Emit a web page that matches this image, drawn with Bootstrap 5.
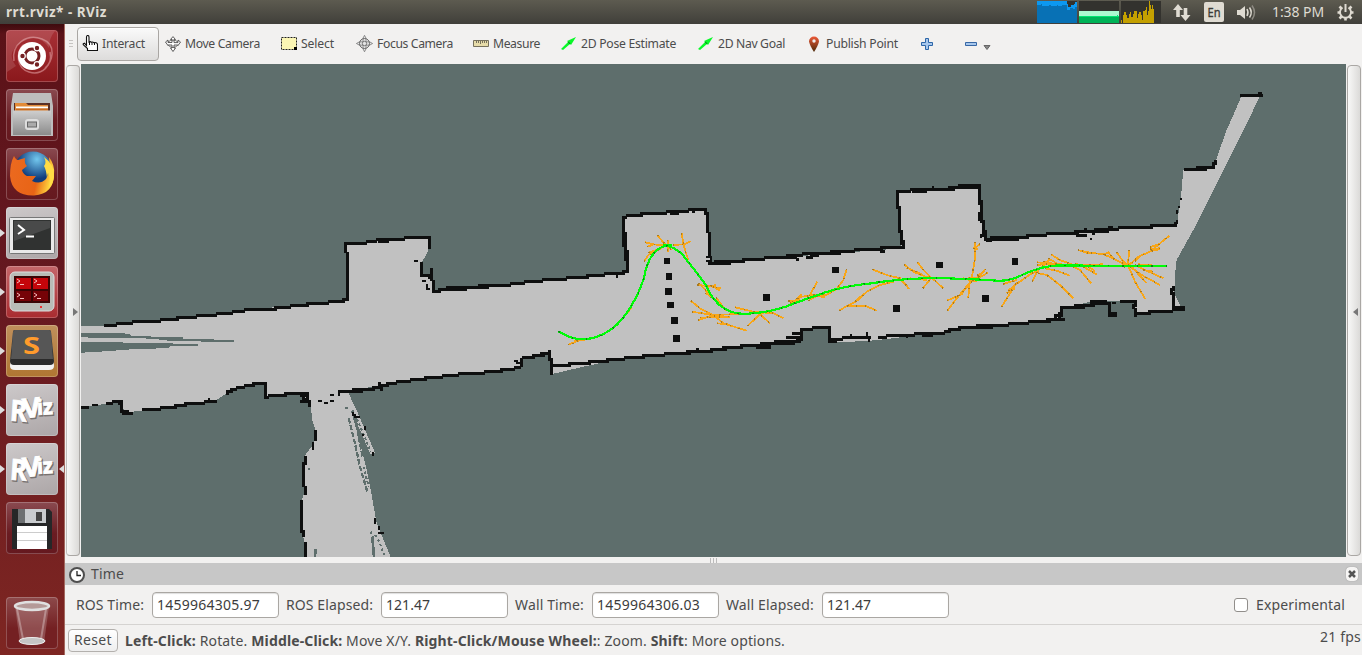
<!DOCTYPE html>
<html lang="en">
<head>
<meta charset="utf-8">
<title>rrt.rviz* - RViz</title>
<link href="https://cdn.jsdelivr.net/npm/bootstrap@5.3.0/dist/css/bootstrap.min.css" rel="stylesheet">
<style>
body{font-family:"Noto Sans","Open Sans",sans-serif;font-size:14px;line-height:20px;color:#4c4c4c;background:#f2f1f0;height:655px;overflow:hidden}
svg{display:block;flex:none}
.fit{white-space:nowrap;display:inline-block;flex:none}
.topbar{height:24px;background:linear-gradient(#5d5b50,#403f3a);color:#dfdbd2;padding-left:6px}
.graphs{margin-right:12px}
.dock{width:65px;background:linear-gradient(#3e0b0e 0,#5b1218 10px,#651820 40%,#7e2622);border-right:1px solid #a3685f;padding:6px 0 6px 0;flex:none}
.tile{width:52px;height:52px;border-radius:4px;margin-left:6px;position:relative;margin-bottom:7px;box-shadow:inset 0 0 0 1px #ffffff38;background:linear-gradient(#8a4a50,#6a1c22 60%,#65191f)}
.tile.gray{background:linear-gradient(165deg,#cdc9ca,#aca6a7)}
.tile.last{margin:auto 0 0 6px;background:linear-gradient(#8d4a4b,#742022 60%)}
.tile.red{background:linear-gradient(#a83036,#8a181c)}
.tile.term{background:linear-gradient(#c4666a,#a92c30)}
.tile.sub{background:linear-gradient(#c0905c,#b07632)}
.run::before,.act::after{content:"";position:absolute;top:22px;border:4px solid transparent}
.run::before{left:-6px;border-left:5px solid #ddd;border-right:0}
.act::after{right:-6px;border-right:5px solid #ddd;border-left:0}
.tools{height:40px;font-size:12.2px;padding-left:4px}
.tool{height:34px;margin-top:-1px}
.tool svg{margin-right:4px}
.tool.on{width:82px;border:1px solid #a9a6a3;border-radius:4px;background:linear-gradient(#fafafa,#dddcdb);padding-left:4px;margin-right:6px;box-shadow:inset 0 1px #fff}
.view{height:493px}
.side{width:14px;height:491px;margin:1px 1px 0;border:1px solid #aaa7a4;border-radius:4px;background:linear-gradient(90deg,#f8f8f7,#dbdad8)}
.side.l{border-left-color:#c2c0be}
.splitter{height:6px}
.dockhead{height:22px;background:#c7c7c7;padding:0 4px}
.fields{height:40px;padding-left:11px;border-bottom:1px solid #d5d3d1}
.field{width:127px;height:26px;margin:0 7px 0 8px;border:1px solid #aaa7a3;border-radius:4px;background:#fff;color:#3c3c3c;padding:2px 4px;box-shadow:inset 0 1px 1px #0002}
.check{width:14px;height:14px;border:1px solid #918e8b;border-radius:3px;background:#fff}
.status{height:30px;padding-left:3px}
.reset{width:50px;height:23px;border:1px solid #b3b0ad;border-radius:4px;background:linear-gradient(#fff,#eee);text-align:center;line-height:20px}
.x{width:12px;height:14px;border-radius:4px;background:#f6f5f4;box-shadow:0 0 1px #777}
</style>
<script src="https://cdn.jsdelivr.net/npm/bootstrap@5.3.0/dist/js/bootstrap.bundle.min.js"></script>
</head>
<body class="d-flex flex-column">
<header class="topbar d-flex align-items-center justify-content-between">
  <b class="fit" data-w="101" style="font-size:13.5px">rrt.rviz* - RViz</b>
  <div class="d-flex align-items-center">
    <svg class="graphs" width="124" height="24" shape-rendering="crispEdges">
      <path fill="#33322e" d="M0 1h40v22H0zM42 1h40v22H42zM84 1h40v22H84z"/>
      <path fill="#0c98f0" d="M0 1h30v3h1v3h3V5h3V4h1V2h2v21H0z"/><path fill="#0871b5" d="M0 5h4V4h1v2h7V5h2v1h6V5h1v1h4V5h5v5h3V8h3v1h2V7h2v16H0z"/>
      <path fill="#acf9cf" d="M42 11h40v5H42z"/><path fill="#00e770" d="M42 16h38v-1h1v1h1v1H42z"/><path fill="#00b357" d="M42 17h40v6H42z"/>
      <path fill="#c4a000" d="M84 23v-3h1v3h1v-8h1v-3h2v3h1v3h2v-4h1v-2h1v5h2v-3h1v-3h3v7h1v-4h1v-2h2v3h1v5h1v-9h2v-1h1v-3h1v8h1v-4h1V1h1v4h1v4h1V5h1v4h1v14z"/>
    </svg>
    <svg width="18" height="24" style="margin-right:13px" fill="#dfdbd2"><path d="M5 4 0 10h3.200v7h3.600v-7H10zM12.500 21 7.500 15h3.200V8h3.600v7h3.200z"/></svg>
    <svg width="20" height="24" style="margin-right:12px"><rect y="2" width="20" height="20" rx="2" fill="#dfdbd2"/><text x="3.500" y="17" font-size="12" textLength="13" lengthAdjust="spacingAndGlyphs" fill="#3c3b37" stroke="#3c3b37" stroke-width=".3">En</text></svg>
    <svg width="20" height="24" style="margin-right:16px"><path fill="#dfdbd2" d="M1 10h3l5-4v13l-5-4H1z"/><path fill="none" stroke="#dfdbd2" stroke-width="1.500" d="M11 9q2 3.500 0 7M13.500 7.500q3.500 5 0 10"/><path fill="none" stroke="#8d8a82" stroke-width="1.500" d="M16 5.500q5 7 0 14"/></svg>
    <span class="fit" data-w="52" style="margin-right:13px">1:38 PM</span>
    <svg width="17" height="24" style="margin-right:8px" fill="none" stroke="#dfdbd2"><path stroke-width="1.900" d="M5.500 7.600a5.500 5.500 0 1 0 6 0"/><path stroke-width="2" d="M8.500 4v8"/><path stroke-width="2.600" d="M.500 12.500h3M13.500 12.500h3M2.500 6.500l2 2M14.500 6.500l-2 2M2.500 18.500l2-2M14.500 18.500l-2-2M8.500 17.500v3"/></svg>
  </div>
</header>
<div class="d-flex flex-grow-1">
<aside class="dock d-flex flex-column">
  <div class="tile red"><svg width="52" height="52" fill="none"><path stroke="#d58c8e" stroke-opacity=".7" stroke-width="1.500" d="M8 31C5 15 20 3 36 9s10 23 3 29M44 22c3 13-8 24-21 20S10 23 17 15"/><path fill="#fff" fill-opacity=".13" d="M1 1h48Q43 8 43 18 33 2 16 12T10 36L1 42z"/><circle cx="26" cy="26" r="14" fill="#fff"/><circle cx="26" cy="26" r="7" stroke="#742022" stroke-width="3"/><g stroke="#fff" stroke-width="1.200" fill="#742022"><circle cx="16.500" cy="26" r="2.800"/><circle cx="31" cy="18" r="2.800"/><circle cx="31" cy="34.500" r="2.800"/></g></svg></div>
  <div class="tile"><svg width="52" height="52"><defs><linearGradient id="cab" x2="0" y2="1"><stop stop-color="#cfcfcf"/><stop offset="1" stop-color="#8b8b8b"/></linearGradient></defs><path fill="#bdbdbd" d="M7 4h38l2 13v30H5V17z"/><path fill="#5a3026" d="M8 14h36v9H8z"/><path fill="#e28b38" d="M9 14h11l2 2h20v7H9z"/><path fill="#fff" d="M10 17.500h32v2H10z"/><path fill="#c86a20" d="M10 19.500h32v2H10z"/><path fill="url(#cab)" d="M7 21.500h38V46H7z"/><rect x="19" y="30" width="14" height="11" rx="3" fill="#ddd"/><rect x="21.500" y="33" width="9" height="5" fill="#aaa" stroke="#666"/></svg></div>
  <div class="tile"><svg width="52" height="52"><defs><radialGradient id="sky" cx=".6" cy=".2"><stop stop-color="#72c7ee"/><stop offset="1" stop-color="#103c7c"/></radialGradient><linearGradient id="fox" x2="1" y2=".2"><stop stop-color="#ec6a20"/><stop offset=".7" stop-color="#e86416"/><stop offset="1" stop-color="#ffd33d"/></linearGradient></defs><circle cx="27" cy="23" r="19.500" fill="url(#sky)"/><path fill="url(#fox)" d="M8 8q2 4 4 4l7-2q-1 5 2 8l-5 4q1 4 5 6l9 0-4 5q8 4 14-2 5-8 3-22 6 8 5 17 0 20-20 21.500Q6 48 4 28q0-13 4-20z"/><path fill="#ffdc45" d="M38 9q11 8 10 20-1 7-5 11 2-10-1-15l-1 5q-1-9-3-12 3-3 0-9z"/></svg></div>
  <div class="tile gray run"><svg width="52" height="52"><rect x="3.500" y="10.500" width="45" height="36" rx="1" fill="#e9e9e9" stroke="#777"/><rect x="7" y="13" width="38" height="30" fill="#303231"/><path fill="#fff" opacity=".12" d="M8 14h36v7L8 34z"/><path fill="none" stroke="#fff" stroke-width="2" d="M12 18l6 5-6 4M20 29.500h8"/></svg></div>
  <div class="tile term run"><svg width="52" height="52"><rect x="4" y="6" width="44" height="39" rx="5" fill="#b9bcb7" stroke="#ddd"/><path fill="#3a0505" d="M8 10h36v27H8z"/><path fill="#c5050a" d="M10 12h15v11H10zM27 12h15v11H27z"/><path fill="#760307" d="M10 25h15v10H10zM27 25h15v10H27z"/><path stroke="#f5bcbc" fill="none" d="M11 13l3 2-3 2M14 18.500h4M28 13l3 2-3 2M31 18.500h4M11 27l3 2-3 2M14 32.500h4M28 27l3 2-3 2M31 32.500h4"/><circle cx="35" cy="41" r="1" fill="red"/></svg></div>
  <div class="tile sub run"><svg width="52" height="52"><path fill="#f2f2f2" d="M7 8L4 41q0 4 5 4h34q5 0 5-4L45 8z"/><path fill="#2b2b2b" d="M9 5h34q2 0 2 2l3 29q0 4-4 4H8q-4 0-4-4L7 7q0-2 2-2z"/><path fill="#565656" d="M9 5h34q2 0 2 2l2 27H5L7 7q0-2 2-2z"/><text x="17" y="28.500" font-size="23" font-weight="bold" textLength="17" lengthAdjust="spacingAndGlyphs" fill="#ff9b2c">S</text></svg></div>
  <div class="tile gray run"><svg width="52" height="52" font-family="Open Sans" font-weight="bold"><g fill="#77716f" stroke="#77716f" stroke-width="1.500" transform="translate(1 1.200)"><text x="4" y="37" font-size="29" textLength="17" lengthAdjust="spacingAndGlyphs" transform="rotate(4 10 30)">R</text><text x="17" y="33.500" font-size="27" textLength="18" lengthAdjust="spacingAndGlyphs" transform="rotate(-6 24 28)">V</text><text x="31" y="30.500" font-size="21" textLength="16" lengthAdjust="spacingAndGlyphs" transform="rotate(-3 36 28)">iz</text></g><g fill="#fff" stroke="#fff" stroke-width=".9"><text x="4" y="37" font-size="29" textLength="17" lengthAdjust="spacingAndGlyphs" transform="rotate(4 10 30)">R</text><text x="17" y="33.500" font-size="27" textLength="18" lengthAdjust="spacingAndGlyphs" transform="rotate(-6 24 28)">V</text><text x="31" y="30.500" font-size="21" textLength="16" lengthAdjust="spacingAndGlyphs" transform="rotate(-3 36 28)">iz</text></g></svg></div>
  <div class="tile gray run act"><svg width="52" height="52" font-family="Open Sans" font-weight="bold"><g fill="#77716f" stroke="#77716f" stroke-width="1.500" transform="translate(1 1.200)"><text x="4" y="37" font-size="29" textLength="17" lengthAdjust="spacingAndGlyphs" transform="rotate(4 10 30)">R</text><text x="17" y="33.500" font-size="27" textLength="18" lengthAdjust="spacingAndGlyphs" transform="rotate(-6 24 28)">V</text><text x="31" y="30.500" font-size="21" textLength="16" lengthAdjust="spacingAndGlyphs" transform="rotate(-3 36 28)">iz</text></g><g fill="#fff" stroke="#fff" stroke-width=".9"><text x="4" y="37" font-size="29" textLength="17" lengthAdjust="spacingAndGlyphs" transform="rotate(4 10 30)">R</text><text x="17" y="33.500" font-size="27" textLength="18" lengthAdjust="spacingAndGlyphs" transform="rotate(-6 24 28)">V</text><text x="31" y="30.500" font-size="21" textLength="16" lengthAdjust="spacingAndGlyphs" transform="rotate(-3 36 28)">iz</text></g></svg></div>
  <div class="tile"><svg width="52" height="52"><path fill="#262728" d="M6 7h37l3 3v37H6z"/><path fill="#6d7072" d="M12 7h7v14h-7z"/><path fill="#c9cccf" d="M19 7h21v14H19z"/><path fill="#444" d="M30 10h6v9h-6z"/><path fill="#fff" d="M11 24h30v23H11z"/><path stroke="#ccc" d="M11 30.500h30M11 38.500h30"/></svg></div>
  <div class="tile last"><svg width="52" height="52"><path fill="#fff" fill-opacity=".2" d="M9 9h34l-5 37H14z"/><path stroke="#fff" stroke-opacity=".3" stroke-width="2" d="M11 12l6 30M40 12l-5 30"/><ellipse cx="26" cy="9" rx="17" ry="4" fill="#b59a98" stroke="#e0e0e0" stroke-width="2.500"/><ellipse cx="26" cy="44" rx="13" ry="3.500" fill="#c5c5c5" stroke="#eee"/></svg></div>
</aside>
<main class="flex-grow-1 d-flex flex-column">
  <nav class="tools d-flex align-items-center">
    <svg width="8" height="12"><path stroke="#c6c4c2" d="M0 2.500h4M0 5.500h4M0 8.500h4"/></svg>
    <div class="tool on d-flex align-items-center"><svg width="16" height="17"><path fill="#fff" stroke="#111" stroke-width="1.100" d="M4.500 10.500V2q0-1.500 1.200-1.500T7 2v5q1.300-1 2.400.3 1.300-.8 2.400.4Q15.500 7 15.500 10v5.500h-10v-2L1.500 10q-1-1.500 1-1.800z"/><path stroke="#111" d="M7.500 7v3M10 7.500V10M12.500 8v2"/></svg><span class="fit" data-w="43">Interact</span></div>
    <div class="tool d-flex align-items-center" style="width:116px"><svg width="16" height="16" fill="#fff" stroke="#4d4d4d" stroke-width=".9"><path d="M8 .6l2.500 3H9v3h4V4l2.500 2-2.500 3.500V9H9v3h1.500L8 15.500 5.500 12H7V9H3v.5L.5 6 3 4v2.500h4v-3H5.500z"/><path fill="none" d="M3 6q5-4 10 0M3.500 9.500q4.500 4 9 0" stroke-width=".8"/></svg><span class="fit" data-w="75">Move Camera</span></div>
    <div class="tool d-flex align-items-center" style="width:75px"><svg width="16" height="13"><path fill="#fbf6b4" stroke="#222" stroke-dasharray="2 1" d="M.5.500h15v12H.5z"/><path d="M13 10h3v3h-3z"/></svg><span class="fit" data-w="33">Select</span></div>
    <div class="tool d-flex align-items-center" style="width:117px"><svg width="17" height="17" fill="none" stroke="#777"><path fill="#e4e4e4" stroke-width=".8" d="M8.500.3L10 3.200v3.600h3.500L16.600 8.500 13.500 10.200H10v3.600l-1.500 3L7 13.800v-3.600H3.500L.4 8.500 3.500 6.800H7V3.200z"/><circle cx="8.500" cy="8.500" r="5" stroke="#666"/><circle cx="8.500" cy="8.500" r="2.200"/></svg><span class="fit" data-w="76">Focus Camera</span></div>
    <div class="tool d-flex align-items-center" style="width:88px"><svg width="16" height="8"><path fill="#e7dca9" stroke="#77715c" d="M.5.500h15v6H.5z"/><path stroke="#77715c" d="M3.500 1v2M5.500 1v2M7.500 1v3M9.500 1v2M11.500 1v2M13.500 1v2"/></svg><span class="fit" data-w="47">Measure</span></div>
    <div class="tool d-flex align-items-center" style="width:137px"><svg width="16" height="14"><path fill="#08f928" d="M0 12l7-7-1-1 9-4-5 8-1-1-7 6z"/><path fill="#098b1b" d="M7.500 4.500l2 2-.7.700-2-2z"/></svg><span class="fit" data-w="95">2D Pose Estimate</span></div>
    <div class="tool d-flex align-items-center" style="width:110px"><svg width="16" height="14"><path fill="#08f928" d="M0 12l7-7-1-1 9-4-5 8-1-1-7 6z"/><path fill="#098b1b" d="M7.500 4.500l2 2-.7.700-2-2z"/></svg><span class="fit" data-w="67">2D Nav Goal</span></div>
    <div class="tool d-flex align-items-center" style="width:113px"><svg width="14" height="16"><defs><linearGradient id="pin" x2="0" y2="1"><stop stop-color="#ed5937"/><stop offset="1" stop-color="#4c2a0a"/></linearGradient></defs><path fill="url(#pin)" d="M1 5.500a5 5 0 0 1 10 0Q10 10 6 16 2 10 1 5.500"/><circle cx="6" cy="5" r="1.700" fill="#eee"/></svg><span class="fit" data-w="72">Publish Point</span></div>
    <svg width="44" height="12"><path fill="#a7c7ec" stroke="#2d66a8" d="M4.500.5h3v4h4v3h-4v4h-3v-4h-4v-3h4z"/></svg>
    <svg width="28" height="14"><path fill="#a7c7ec" stroke="#3767a5" d="M.5 5.500h11v3H.5z"/><path fill="#888" stroke="#666" d="M19 8.500h6l-3 4z"/></svg>
  </nav>
  <section class="view d-flex">
    <div class="side l d-flex align-items-center"><svg width="12" height="8" style="margin-top:2px"><path fill="#777" d="M6 0l5 4-5 4z"/></svg></div>
    <svg id="map" width="1265" height="493" viewBox="81 64 1265 493" shape-rendering="crispEdges">
      <path fill="#5e6e6c" d="M81 64h1265v493H81z"/>
      <g fill="#c1c1c1">
        <path transform="translate(80 220) scale(.33333)" d="M3 318 75 318 120 308 225 303 340 290 500 270 660 254 800 241 800 72 900 62 1047 52 1047 85 1035 112 1022 130 1022 165 1053 170 1060 212 1205 203V460L1035 475 930 490 805 514 800 530 818 590 838 660 858 740 875 825 890 910 932 1011H680L675 970 662 925V850L672 820V710L695 680 706 660V630L697 600 692 555 665 520 560 528 555 492 480 498 440 520 405 543 250 563 135 578 122 545 3 562z"/>
        <path transform="translate(480 180) scale(.33333)" d="M-5 321 160 305 440 277 430 110 550 98 678 91 690 247 900 235V488L680 512 395 542 310 560 217 582 205 525 125 532 122 565-5 578z"/>
        <path transform="translate(680 170) scale(.33333)" d="M-5 125 75 122 90 280 300 263 665 235 650 65 760 58 897 48 917 210H975V465L870 475 730 493 630 506 570 512 500 516 450 515 445 475 365 480 360 517 170 532-5 548z"/>
        <path transform="translate(960 80) scale(.33333)" d="M-5 320H57L75 480 230 466 450 448 650 436 663 350 670 270 760 265 775 220 800 150 820 105 846 45H902L870 110 800 250 750 350 700 450 650 540 645 585 643 640 662 680 640 690 525 698V662L405 662 310 684 300 717 150 736-5 746z"/>
      </g>
      <path fill="#5e6e6c" transform="translate(80 220) scale(.33333)" d="M3 339 125 339 150 343 155 348 308 352 310 357 430 359 462 361V365H380L245 361 228 356 30 353 3 351zM3 366H130V369L325 371 354 373V377H270L268 383 190 388 108 389V393L26 396 3 399zM702 988h9v10l-5 13h-4zM684 743h6v6h-6zM795 560h8v8h-8z"/>
      <g fill="none" transform="translate(80 220) scale(.33333)"><path stroke="#c1c1c1" stroke-width="14" d="M798 520 826 580 852 640 878 700"/><path stroke="#5e6e6c" stroke-width="7" stroke-dasharray="16 5" d="M806 595 825 670 840 740 862 815M826 590 836 650 848 710"/><path stroke="#5e6e6c" stroke-width="6" stroke-dasharray="8 7" d="M818 570 850 640 872 695M850 740 866 800M872 935 880 955M886 945 900 970 912 1005"/><path stroke="#5e6e6c" stroke-width="8" d="M877 950 882 1011"/></g>
      <path id="walls" fill="#0e0f0f"/>
      <path id="tree" fill="none" stroke="#f8a618" stroke-width="1.800"/>
      <path id="nodes" fill="none" stroke="#a87a20" stroke-width="1.500" stroke-dasharray="1.300 8"/>
      <path id="route" fill="none" stroke="#00fb08" stroke-width="2.200"/>
      <path id="routeDots" fill="none" stroke="#078b10" stroke-width="1.500" stroke-dasharray="1.500 13"/>
      <path fill="#0e0f0f" d="M664 258h6v6h-6zM666 273h6v7h-6zM665 288h7v7h-7zM667 302h7v6h-7zM671 317h7v7h-7zM673 335h7v7h-7zM763 294h7v7h-7zM832 267h7v6h-7zM893 305h7v7h-7zM936 262h7v6h-7zM1012 258h6v7h-6zM982 295h7v7h-7z"/>
    </svg>
    <div class="side d-flex align-items-center"><svg width="12" height="8" style="margin-top:2px"><path fill="#777" d="M10 0L5 4l5 4z"/></svg></div>
  </section>
  <div class="splitter d-flex justify-content-center align-items-center"><svg width="8" height="5"><path stroke="#bbb" d="M.5 0v5M3.500 0v5M6.500 0v5"/></svg></div>
  <div class="dockhead d-flex align-items-center"><svg width="16" height="16" style="margin:2px 6px 0 0"><circle cx="8" cy="8" r="7" fill="#fff" stroke="#4e4e4e" stroke-width="2"/><path fill="none" stroke="#222" stroke-width="1.300" d="M8 4v4.500h4"/></svg><span class="fit" data-w="33">Time</span><div class="x ms-auto"><svg width="12" height="14"><path stroke="#555" stroke-width="2.500" d="M3 4l6 6M9 4l-6 6"/></svg></div></div>
  <div class="fields d-flex align-items-center">
    <span class="fit" data-w="68">ROS Time:</span><div class="field"><span class="fit" data-w="103">1459964305.97</span></div>
    <span class="fit" data-w="87">ROS Elapsed:</span><div class="field"><span class="fit" data-w="44">121.47</span></div>
    <span class="fit" data-w="69">Wall Time:</span><div class="field"><span class="fit" data-w="103">1459964306.03</span></div>
    <span class="fit" data-w="88">Wall Elapsed:</span><div class="field"><span class="fit" data-w="44">121.47</span></div>
    <div class="check ms-auto" style="margin-right:8px"></div><span class="fit" data-w="89" style="margin-right:17px">Experimental</span>
  </div>
  <div class="status d-flex align-items-center">
    <div class="reset"><span class="fit" data-w="38">Reset</span></div>
    <span class="fit" data-w="660" style="margin:2px 0 0 7px"><b>Left-Click:</b> Rotate. <b>Middle-Click:</b> Move X/Y. <b>Right-Click/Mouse Wheel:</b>: Zoom. <b>Shift</b>: More options.</span>
    <span class="fit ms-auto" data-w="41" style="margin:-7px 1px 0 0">21 fps</span>
  </div>
</main>
</div>
<script>
// Each group: origin x, origin y, then polylines in thirds of a pixel.
const walls = [
 [80,220,"75,316 100,316 120,308 150,310 170,303 225,303 260,298 340,290 445,279 500,270 560,268 660,255 775,244 804,238 800,185 802,130 797,72","797,70 855,68 895,60 970,55 1050,52 1047,80","895,63 920,63","1022,128 1022,165 1053,170 1053,150","1055,170 1061,212 1105,209 1200,202","1100,205 1200,199","3,560 20,562","40,554 50,554","80,550 120,543 124,575 140,580","125,543 127,575 155,578","190,570 270,562 315,553 370,547 405,543","385,537 387,543","440,518 470,504 525,492 555,492 557,530","555,530 610,524 640,518 680,520 688,555","665,525 680,545 665,545","675,520 670,540","720,543 725,543","737,552 740,552","755,546 760,546","755,523 757,525","775,525 775,515 830,510 895,503 930,490 980,482 1035,475 1140,462 1200,458","815,512 845,512","900,490 904,505","704,635 708,660","706,640 704,655","698,672 698,685","676,710 672,735 671,780 675,820","662,845 662,865 666,910 662,925 672,945","674,968 678,985 678,1005","820,578 825,590 836,594","855,622 855,625","847,643 849,645","877,698 877,708","888,898 888,908","895,922 895,925","900,942 908,942","1008,125 1010,125","1032,182 1034,182","1040,197 1046,210"],
 [480,180,"0,321 80,314 160,303 250,296 320,289 390,281 440,276 440,220 434,180 430,110 470,104 550,98 620,91 678,90 682,120 686,170 688,225","0,318 50,318","430,112 432,190 440,250","560,95 590,100","625,88 640,91","674,95 684,110","690,165 690,190","414,280 414,290","680,245 692,245 694,235 680,232","690,249 770,243 830,237 900,231","690,252 745,250","0,578 50,574 80,568 120,563 125,535 200,522 205,515 207,535","105,545 115,548","185,522 205,522 210,530 213,560 213,580","215,557 280,552 380,541 450,533 540,524 620,517 700,510 770,500 840,493 900,487","650,510 678,515","820,497 870,497"],
 [680,170,"90,278 165,273 240,266 320,259 365,253 440,248 520,241 570,237 630,233 670,232 668,215 662,200 658,120 650,100 650,65 700,60 760,58 835,53 897,47 900,90","90,282 150,280","330,262 350,265","380,260 410,258","435,252 480,252","595,240 610,242","652,70 655,110 664,220","697,65 735,65","765,57 820,57","758,50 758,56","835,50 895,50","902,95 904,135 908,160 914,185 918,210 960,207","895,128 895,145","902,195 902,200","920,213 932,213","0,548 75,545 110,537 170,531 230,524 285,517 350,511 364,505 366,478 425,472 445,472 448,510 510,502 565,499 570,512","230,530 265,530","285,520 360,516","340,490 362,490","320,504 360,502","448,512 465,512","515,498 520,502","560,492 566,500","600,501 650,496 730,491 790,488 815,477 870,472 910,466 960,463","680,498 680,502","730,495 755,495"],
 [960,80,"0,318 57,318 57,360 62,375 67,430 74,475 85,483","62,370 66,420","80,475 170,474 230,464 305,461 370,454 450,447 510,442 610,437 648,434 650,425","85,478 170,477","300,459 350,461","350,465 375,465","375,450 400,457 440,453","450,444 470,449","393,475 393,478","650,397 652,395","663,358 663,360","656,382 656,384","674,270 715,267 757,263 765,246","710,264 757,264","846,44 902,44 900,38","638,620 636,635 640,650 640,680","637,690 670,688","640,684 670,684","525,685 528,700 635,692","525,703 570,700","0,744 80,738 170,731 230,724 310,718","60,742 95,742","260,715 300,715 303,690","285,710 300,700","305,684 350,684 400,670 445,668 450,705","310,680 395,677 415,663 440,668","392,662 415,664","447,675 452,708 468,708","450,700 465,700","460,670 465,668","482,662 525,662 522,680","485,665 505,662"]
];
// Walls snap to the occupancy grid; tiny strokes stay single cells.
let d = "";
for (const [ox, oy, ...lines] of walls) for (const l of lines) {
  const p = l.split(" ").map(s => s.split(",").map(Number));
  for (let i = 1; i < p.length; i++) {
    const [x0, y0] = p[i-1], [x1, y1] = p[i], len = Math.max(Math.abs(x1-x0), Math.abs(y1-y0)), n = Math.ceil(len / 4) + 1, s = len > 14 ? 3 : 2;
    for (let k = 0; k <= n; k++) {
      const x = ox + (x0 + (x1-x0)*k/n)/3, y = oy + (y0 + (y1-y0)*k/n)/3;
      d += `M${Math.round((x-1.3)/2)*2} ${Math.round((y-1.3)/2)*2}h${s}v${s}h-${s}z`;
    }
  }
}
document.getElementById("walls").setAttribute("d", d);

// Search tree branches
const tree = [
 [480,180,"265,495 290,483 322,478","278,492 290,478","495,187 520,193 560,197","500,200 520,195","532,165 548,185 563,200","492,245 505,225 545,205","505,218 540,207","563,180 563,215","548,190 575,210","578,195 612,193 632,184","605,160 612,200 625,240","442,400 455,380","652,315 685,318 722,325","655,310 672,325 695,355","670,305 685,320 708,315","675,340 690,345","700,320 720,332","632,362 660,385 700,405 730,430 800,452","635,395 700,405 780,402","655,420 700,405","660,413 750,410","710,430 745,433","708,352 725,375 740,392","765,382 820,395 880,400","802,438 840,403 870,430","820,395 870,395 900,410"],
 [680,170,"325,393 345,392 365,373","330,400 365,380 400,375","335,395 360,390","385,392 410,378 435,382","388,378 412,335","400,374 440,374 470,357 490,330 500,298","240,430 270,425 310,445","478,422 500,408 530,393 560,365 600,345 640,335","500,408 555,407 590,422","525,395 540,380","577,298 620,315 660,325 687,357","655,325 685,350","672,283 700,305 750,325","680,293 725,313","712,275 730,300 755,325","690,325 740,330","728,355 755,323 790,355","740,322 790,325","885,215 885,265 875,325","900,222 885,235","880,235 893,238","865,385 868,340 880,322","802,422 830,385 868,340 895,320 917,297","800,392 840,375 868,345","865,325 900,322 925,307","850,325 890,335","830,380 850,370","890,315 910,310"],
 [960,80,"125,680 150,640 165,615 215,580 230,575","140,640 165,625","145,632 170,610 190,598","130,612 170,600","217,605 235,570 268,540","230,547 260,550 330,555 360,570 393,610","235,580 260,585 300,615 340,655","230,555 290,550","250,545 275,550","265,535 290,550","272,523 300,540 340,555","255,565 290,572 330,587","345,550 370,560 410,583","385,560 405,573","360,555 430,553","353,510 380,518 430,522 500,555","365,513 400,520","430,525 445,517 460,535","470,517 490,545 505,555","508,510 503,560","505,557 525,605 556,657","510,555 560,610","510,560 545,585 600,615","525,555 555,570 610,595","550,570 580,575","505,557 535,530 570,515 628,467","525,545 540,528","570,507 600,505","570,502 595,493","575,513 600,507","485,550 520,565","492,562 520,547","535,553 600,558"]
];
const toPath = g => g.map(([ox, oy, ...ls]) => ls.map(l => "M" + l.split(" ").map(s => { const [x, y] = s.split(",").map(Number); return (ox + x/3).toFixed(1) + " " + (oy + y/3).toFixed(1); }).join("L")).join("")).join("");
const t = toPath(tree);
document.getElementById("tree").setAttribute("d", t);
document.getElementById("nodes").setAttribute("d", t);
// Planned route
const route = "M558.500 331.500L569 337Q582 341 595 337.500Q612 332 623 318Q637 300 644 278Q647 260 655 252Q661 246 667 246Q674 247 682 254L693 268L706 285Q712 301 725 309Q736 315 750 313.500Q775 312 795 303L825 292.500Q844 286 870 283.500Q904 278 940 278L990 280Q1008 283 1024 274Q1045 265 1060 265.500L1167 266";
document.getElementById("route").setAttribute("d", route + "M663 245h9M663 246h9");
document.getElementById("routeDots").setAttribute("d", route);

// Spread each label over its measured width
document.querySelectorAll(".fit").forEach(e => {
  const w = +e.dataset.w, n = e.textContent.length;
  e.style.letterSpacing = (w - e.getBoundingClientRect().width) / n + "px";
});
</script>
</body>
</html>
